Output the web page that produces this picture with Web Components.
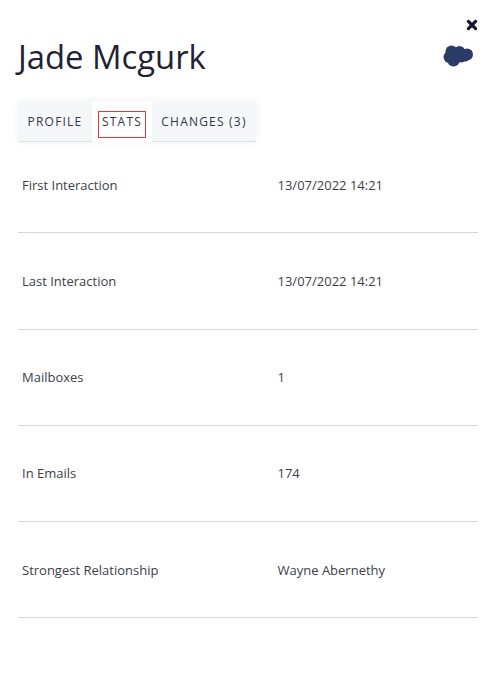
<!DOCTYPE html>
<html>
<head>
<meta charset="utf-8">
<title>Jade Mcgurk</title>
<style>
  html, body { margin: 0; background: #fff; }
  body { font-family: "Open Sans", sans-serif; }
</style>
</head>
<body>
<contact-panel name="Jade Mcgurk">
  <stat-row slot="rows" first label="First Interaction" value="13/07/2022 14:21"></stat-row>
  <stat-row slot="rows" label="Last Interaction" value="13/07/2022 14:21"></stat-row>
  <stat-row slot="rows" label="Mailboxes" value="1"></stat-row>
  <stat-row slot="rows" label="In Emails" value="174"></stat-row>
  <stat-row slot="rows" label="Strongest Relationship" value="Wayne Abernethy"></stat-row>
</contact-panel>

<script>
class TabBar extends HTMLElement {
  connectedCallback() {
    this.attachShadow({ mode: 'open' });

    this.shadowRoot.innerHTML = `
      <style>
        :host {
          display: block;
          width: 238px;
        }

        .tabs {
          display: flex;
          height: 40px;
          background: #f6f7f9;
          border-bottom: 1px solid #dfe1e6;
          box-shadow: 0 0 8px rgba(30, 40, 70, 0.06);
        }

        .tab {
          display: flex;
          align-items: center;
          justify-content: center;
          box-sizing: border-box;
          height: 40px;
          font-size: 12px;
          font-weight: 500;
          letter-spacing: 1.2px;
          color: #33364a;
        }

        .profile { width: 74px; }
        .changes { flex: 1; }

        .active {
          align-items: flex-start;
          width: 60px;
          height: 41px;
          padding-top: 10px;
          background: #fff;
          border-radius: 3px 3px 0 0;
          margin-bottom: -1px;
        }

        .focus {
          display: flex;
          justify-content: center;
          box-sizing: border-box;
          width: 48px;
          height: 27px;
          padding-top: 1px;
          line-height: 18px;
          border: 1px solid #e8363f;
        }
      </style>

      <div class="tabs">
        <div class="tab profile">PROFILE</div>
        <div class="tab active"><span class="focus">STATS</span></div>
        <div class="tab changes">CHANGES (3)</div>
      </div>
    `;
  }
}

class StatRow extends HTMLElement {
  connectedCallback() {
    this.attachShadow({ mode: 'open' });

    this.shadowRoot.innerHTML = `
      <style>
        :host {
          display: flex;
          box-sizing: border-box;
          height: 96.1px;
          padding: 38.25px 0 0 4px;
          border-bottom: 1px solid #cfd4e2;
          font-size: 13px;
          line-height: 18px;
          color: #3e4048;
        }

        :host([first]) {
          height: 91px;
          margin-bottom: 1px;
          padding-top: 34px;
          border-bottom-color: #ccd6ec;
        }

        .label { width: 255.5px; }
      </style>

      <div class="label"></div>
      <div class="value"></div>
    `;

    this.shadowRoot.querySelector('.label').textContent = this.getAttribute('label');
    this.shadowRoot.querySelector('.value').textContent = this.getAttribute('value');
  }
}

class ContactPanel extends HTMLElement {
  connectedCallback() {
    this.attachShadow({ mode: 'open' });

    this.shadowRoot.innerHTML = `
      <style>
        :host {
          display: block;
          box-sizing: border-box;
          width: 495px;
          height: 675px;
          padding: 0 17px 0 18px;
          color: #1f2233;
        }

        header {
          display: flex;
          justify-content: space-between;
          height: 101px;
        }

        h1 {
          margin: 35px 0 0;
          font-size: 32.8px;
          font-weight: 400;
          line-height: 44px;
        }

        .actions {
          display: flex;
          flex-direction: column;
          align-items: flex-end;
        }

        .close {
          display: block;
          margin: 19px 0 0;
        }

        .cloud {
          display: block;
          margin: 13px 4px 0 0;
        }
      </style>

      <header>
        <h1></h1>
        <div class="actions">
          <svg class="close" width="12" height="12" viewBox="0 0 12 12">
            <path d="M2.4 2.4 L9.6 9.6 M9.6 2.4 L2.4 9.6" stroke="#14172a" stroke-width="3.2" stroke-linecap="round"/>
          </svg>
          <svg class="cloud" width="31" height="23" viewBox="0 0 31 23">
            <g fill="#2c3a66">
              <circle cx="6.5" cy="13" r="6"/>
              <circle cx="8.5" cy="7.5" r="6"/>
              <circle cx="16.5" cy="7.5" r="5.5"/>
              <circle cx="24" cy="10.5" r="6"/>
              <circle cx="10.5" cy="16" r="6.5"/>
              <circle cx="18" cy="12" r="6.5"/>
              <circle cx="22" cy="13" r="4.5"/>
            </g>
          </svg>
        </div>
      </header>

      <tab-bar></tab-bar>
      <slot name="rows"></slot>
    `;

    this.shadowRoot.querySelector('h1').textContent = this.getAttribute('name');
  }
}

customElements.define('tab-bar', TabBar);
customElements.define('stat-row', StatRow);
customElements.define('contact-panel', ContactPanel);
</script>
</body>
</html>
